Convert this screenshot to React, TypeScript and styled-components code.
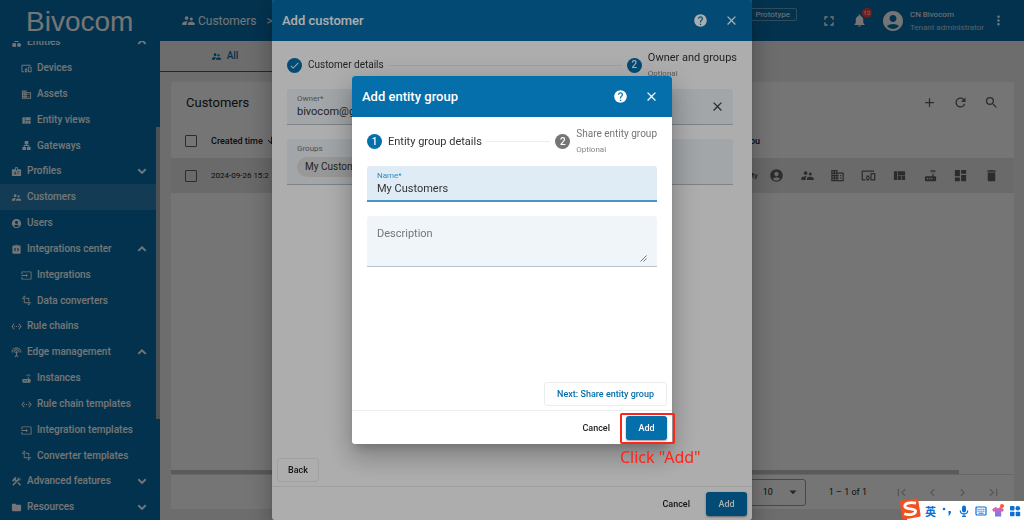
import React from "react";
import styled, { createGlobalStyle, css } from "styled-components";
import type { IconType } from "react-icons";
import {
  MdAccountCircle,
  MdAdd,
  MdArrowDownward,
  MdBadge,
  MdCategory,
  MdCheck,
  MdChevronLeft,
  MdChevronRight,
  MdClose,
  MdConstruction,
  MdDashboard,
  MdDelete,
  MdDevicesOther,
  MdDomain,
  MdFirstPage,
  MdFolder,
  MdFullscreen,
  MdHelp,
  MdInput,
  MdIntegrationInstructions,
  MdLan,
  MdLastPage,
  MdMoreVert,
  MdNotifications,
  MdRefresh,
  MdRouter,
  MdSearch,
  MdSettingsEthernet,
  MdSettingsInputAntenna,
  MdSupervisorAccount,
  MdTransform,
  MdViewQuilt,
} from "react-icons/md";

const PRIMARY = "#056fab";

const GlobalStyle = createGlobalStyle`
  *, *::before, *::after { box-sizing: border-box; }
  body {
    margin: 0;
    overflow: hidden;
    font-family: Roboto, "Liberation Sans", sans-serif;
    font-size: 10px;
    line-height: 14px;
    color: #212121;
  }
  button, input, select, textarea { font: inherit; color: inherit; }
  button { margin: 0; padding: 0; border: 0; background: none; cursor: pointer; }
  svg { display: block; flex: none; }
`;

/* ---------- Shell ---------- */

const Shell = styled.div`
  display: flex;
  height: 100vh;
  background: #eee;
`;

const Sidebar = styled.nav`
  position: relative;
  display: flex;
  flex: none;
  flex-direction: column;
  width: 160px;
  background: ${PRIMARY};
  color: #fff;
`;

const Brand = styled.a`
  flex: none;
  height: 41px;
  padding-left: 26px;
  color: #fff;
  font: 28px/43px "Liberation Sans", Arial, sans-serif;
  text-decoration: none;
`;

const NavViewport = styled.div`
  flex: 1;
  min-height: 0;
  overflow: hidden;
`;

const NavList = styled.div`
  margin-top: -12px;
`;

const navRow = css`
  display: flex;
  align-items: center;
  gap: 5px;
  width: 100%;
  height: 26px;
  padding: 0 13px 0 11px;
  color: #fff;
  font-size: 10px;
  font-weight: 500;
  text-align: left;
  text-decoration: none;
  white-space: nowrap;
`;

const NavLink = styled.a<{ $active?: boolean }>`
  ${navRow}
  background: ${(p) => (p.$active ? "rgba(255, 255, 255, 0.15)" : "none")};
`;

const NavToggle = styled.button`
  ${navRow}
`;

const NavLabel = styled.span`
  flex: 1;
`;

const SubList = styled.div`
  a { padding-left: 21px; }
  a:last-child { height: 25px; }
`;

const ScrollThumb = styled.div`
  position: absolute;
  top: 127px;
  right: 0;
  width: 4px;
  height: 292px;
  background: #a5b2bb;
`;

const Main = styled.div`
  display: flex;
  flex: 1;
  flex-direction: column;
  min-width: 0;
`;

const TopBar = styled.header`
  display: flex;
  flex: none;
  align-items: center;
  height: 41px;
  padding: 0 18px 0 21px;
  background: ${PRIMARY};
  color: #fff;
`;

const Crumb = styled.div`
  display: flex;
  flex: 1;
  align-items: center;
  gap: 2px;
  font-size: 12px;
  span + span { margin-left: 8px; }
`;

const StageChip = styled.span`
  margin: 0 24px 12px 0;
  padding: 0 6px;
  border: 1px solid rgba(255, 255, 255, 0.4);
  border-radius: 2px;
  font-size: 8px;
  line-height: 11px;
`;

const BellButton = styled.button`
  position: relative;
  margin: 0 14px 0 15px;
`;

const BellCount = styled.span`
  position: absolute;
  top: -5px;
  left: 10px;
  width: 10px;
  height: 10px;
  border-radius: 5px;
  background: #f44336;
  font-size: 6px;
  line-height: 10px;
  text-align: center;
`;

const Account = styled.div`
  display: flex;
  align-items: center;
  gap: 5px;
  margin-right: 7px;
  font-size: 8px;
  line-height: 13px;
`;

const AccountRole = styled.div`
  opacity: 0.7;
`;

const TabBar = styled.div`
  display: flex;
  flex: none;
  height: 31px;
`;

const Tab = styled.a`
  display: flex;
  align-items: center;
  justify-content: center;
  gap: 5px;
  width: 129px;
  border-bottom: 1px solid ${PRIMARY};
  color: ${PRIMARY};
  font-weight: 500;
  text-decoration: none;
`;

/* ---------- Customers card ---------- */

const Card = styled.section`
  display: flex;
  flex: 1;
  flex-direction: column;
  min-height: 0;
  margin: 10px 10px 11px 11px;
  border-radius: 2px;
  background: #fff;
`;

const CardHeader = styled.div`
  display: flex;
  flex: none;
  align-items: center;
  justify-content: space-between;
  height: 41px;
  padding: 0 15px;
`;

const CardTitle = styled.h1`
  margin: 0;
  font-size: 13px;
  font-weight: 400;
`;

const IconGroup = styled.div<{ $width: number; $disabled?: boolean }>`
  display: flex;
  justify-content: space-between;
  width: ${(p) => p.$width}px;
  color: ${(p) => (p.$disabled ? "#bdbdbd" : "#616161")};
`;

const TableArea = styled.div`
  flex: 1;
  min-height: 0;
`;

const Table = styled.table`
  width: 100%;
  border-collapse: collapse;
  table-layout: fixed;
  font-size: 9px;
  th, td {
    height: 35px;
    padding: 0;
    overflow: hidden;
    text-align: left;
    white-space: nowrap;
  }
  th { font-weight: 500; }
  td { font-size: 8px; }
  tbody tr { background: #e6e6e6; }
`;

const Checkbox = styled.input`
  display: block;
  width: 12px;
  height: 12px;
  margin: 0 0 0 14px;
  border: 1px solid #616161;
  border-radius: 1px;
  appearance: none;
`;

const SortHeader = styled.span`
  display: flex;
  align-items: center;
  gap: 3px;
`;

const RowActions = styled.div`
  padding-left: 7px;
`;

const GroupName = styled.div`
  padding-left: 3px;
`;

const HScroll = styled.div`
  flex: none;
  height: 4px;
  margin-right: 55px;
  background: #c4c4c4;
`;

const Paginator = styled.div`
  display: flex;
  flex: none;
  align-items: center;
  justify-content: flex-end;
  height: 35px;
  padding-right: 13px;
  border-top: 1px solid #e0e0e0;
  font-size: 9px;
`;

const PageSize = styled.label`
  position: relative;
  margin-right: 23px;
  svg { position: absolute; top: 11px; right: 9px; }
`;

const PageSelect = styled.select`
  width: 60px;
  height: 27px;
  padding: 0 16px;
  border: 1px solid #9e9e9e;
  border-radius: 3px;
  background: none;
  appearance: none;
`;

const PageRange = styled.span`
  margin-right: 27px;
`;

/* ---------- Dialogs ---------- */

const Backdrop = styled.div<{ $level: number }>`
  position: fixed;
  inset: 0;
  z-index: ${(p) => p.$level};
  display: flex;
  align-items: center;
  justify-content: center;
  background: rgba(0, 0, 0, 0.32);
`;

const Dialog = styled.form<{ $wide?: boolean }>`
  display: flex;
  flex-direction: column;
  width: ${(p) => (p.$wide ? 480 : 320)}px;
  max-width: 100%;
  min-height: ${(p) => (p.$wide ? "100vh" : "368px")};
  border-radius: 3px;
  background: #fff;
  box-shadow: 0 7px 10px -4px rgba(0, 0, 0, 0.2), 0 15px 24px 2px rgba(0, 0, 0, 0.14),
    0 6px 29px 5px rgba(0, 0, 0, 0.12);
`;

const DialogHeader = styled.div`
  display: flex;
  align-items: center;
  height: 41px;
  padding: 0 13px 0 10px;
  border-radius: 3px 3px 0 0;
  background: ${PRIMARY};
  color: #fff;
  button { margin-left: 16px; }
`;

const DialogTitle = styled.h2`
  flex: 1;
  margin: 0;
  font-size: 13px;
  font-weight: 500;
`;

const DialogBody = styled.div<{ $wide?: boolean }>`
  display: flex;
  flex: 1;
  flex-direction: column;
  padding: 0 ${(p) => (p.$wide ? 19 : 15)}px 0 15px;
`;

const Stepper = styled.div<{ $wide?: boolean }>`
  display: flex;
  align-items: center;
  height: ${(p) => (p.$wide ? 48 : 49)}px;
  margin-right: ${(p) => (p.$wide ? -4 : 0)}px;
`;

const StepHead = styled.div`
  display: flex;
  align-items: center;
  gap: 6px;
  white-space: nowrap;
`;

const StepBadge = styled.span<{ $idle?: boolean }>`
  display: flex;
  align-items: center;
  justify-content: center;
  width: 15px;
  height: 15px;
  border-radius: 50%;
  background: ${(p) => (p.$idle ? "#757575" : PRIMARY)};
  color: #fff;
  font-size: 10px;
  font-weight: 500;
`;

const StepText = styled.div<{ $muted?: boolean; $size: number }>`
  color: ${(p) => (p.$muted ? "#757575" : "#333")};
  font-size: ${(p) => p.$size}px;
  line-height: 16px;
`;

const StepHint = styled.div`
  color: #858585;
  font-size: 8px;
  line-height: 15px;
`;

const StepLine = styled.div`
  flex: 1;
  height: 1px;
  margin: 0 5px;
  background: #ededed;
`;

const Field = styled.div<{ $focused?: boolean; $tall?: number }>`
  position: relative;
  display: flex;
  flex-direction: column;
  justify-content: flex-start;
  height: ${(p) => p.$tall ?? 36}px;
  margin-bottom: 14px;
  padding: 4px 10px 0;
  border-bottom: ${(p) => (p.$focused ? "2px solid #4497c9" : "1px solid #b9c2c8")};
  border-radius: 3px 3px 0 0;
  background: ${(p) => (p.$focused ? "#e0ecf5" : "#f0f5fa")};
  label { color: ${(p) => (p.$focused ? "#2f8bc2" : "#757575")}; font-size: 8px; line-height: 12px; }
  input { width: 100%; padding: 0; border: 0; outline: 0; background: none; color: #333; font-size: 11px; line-height: 14px; }
  textarea {
    flex: 1; width: 100%; padding: 7px 0 0; border: 0; outline: 0; background: none; resize: none;
    font-size: 11px; line-height: 14px;
  }
  textarea::placeholder { color: #757575; opacity: 1; }
`;

const ClearButton = styled.button`
  position: absolute;
  top: 10px;
  right: 8px;
  color: #424242;
`;

const ResizeGrip = styled.svg`
  position: absolute;
  right: 10px;
  bottom: 4px;
`;

const GroupChip = styled.span`
  align-self: flex-start;
  height: 20px;
  margin-top: 2px;
  padding: 0 8px;
  border-radius: 10px;
  background: #e0e0e0;
  color: #333;
  line-height: 20px;
`;

const StepActions = styled.div<{ $end?: boolean }>`
  display: flex;
  justify-content: ${(p) => (p.$end ? "flex-end" : "flex-start")};
  padding: 0 5px 4px;
`;

const OutlineButton = styled.button<{ $primary?: boolean }>`
  height: 24px;
  padding: 0 ${(p) => (p.$primary ? 12 : 10)}px;
  border: 1px solid #ececec;
  border-radius: 3px;
  color: ${(p) => (p.$primary ? PRIMARY : "#212121")};
  font-size: 9px;
  font-weight: 500;
`;

const DialogFooter = styled.div`
  display: flex;
  align-items: center;
  justify-content: flex-end;
  height: 34px;
  padding: 0 5px;
  border-top: 1px solid #ececec;
`;

const TextButton = styled.button`
  height: 24px;
  margin-right: 16px;
  font-size: 9px;
  font-weight: 500;
`;

const FilledButton = styled.button`
  width: 41px;
  height: 24px;
  border-radius: 3px;
  background: ${PRIMARY};
  box-shadow: 0 1px 2px rgba(0, 0, 0, 0.4);
  color: #fff;
  font-size: 9px;
  font-weight: 500;
`;

const Callout = styled.div`
  position: relative;
  display: flex;
`;

const CalloutFrame = styled.div`
  position: absolute;
  inset: -3px -8px -4px -6px;
  border: 2px solid #ff2318;
  border-radius: 2px;
  pointer-events: none;
`;

const CalloutText = styled.div`
  position: absolute;
  top: 30px;
  left: -6px;
  color: #ff2318;
  font: 16px/22px "Noto Sans", sans-serif;
  white-space: nowrap;
`;

/* ---------- Input method bar ---------- */

const ImeBar = styled.div`
  position: fixed;
  right: 0;
  bottom: 0;
  z-index: 5;
  display: flex;
  align-items: center;
  gap: 5px;
  height: 19px;
  padding: 0 3px 0 18px;
  background: #fff;
  color: #0b6fd3;
  font: 700 11px/18px "Noto Sans CJK SC", sans-serif;
`;

const ImeLogo = styled.svg`
  position: absolute;
  bottom: 0;
  left: -8px;
`;

const Chevron = ({ up }: { up?: boolean }) => (
  <svg width="10" height="8" viewBox="0 0 10 8" fill="none" stroke="currentColor" strokeWidth="2">
    <path d={up ? "M1.3 5.9 5 2.3l3.7 3.6" : "M1.3 2.3 5 5.9l3.7-3.6"} />
  </svg>
);

type NavItem = { icon: IconType; label: string; open?: boolean; group?: boolean; active?: boolean; items?: [IconType, string][] };

const NAV: NavItem[] = [
  {
    icon: MdCategory, label: "Entities", group: true, open: true,
    items: [[MdDevicesOther, "Devices"], [MdDomain, "Assets"], [MdViewQuilt, "Entity views"], [MdLan, "Gateways"]],
  },
  { icon: MdBadge, label: "Profiles", group: true },
  { icon: MdSupervisorAccount, label: "Customers", active: true },
  { icon: MdAccountCircle, label: "Users" },
  {
    icon: MdIntegrationInstructions, label: "Integrations center", group: true, open: true,
    items: [[MdInput, "Integrations"], [MdTransform, "Data converters"]],
  },
  { icon: MdSettingsEthernet, label: "Rule chains" },
  {
    icon: MdSettingsInputAntenna, label: "Edge management", group: true, open: true,
    items: [
      [MdRouter, "Instances"], [MdSettingsEthernet, "Rule chain templates"],
      [MdInput, "Integration templates"], [MdTransform, "Converter templates"],
    ],
  },
  { icon: MdConstruction, label: "Advanced features", group: true },
  { icon: MdFolder, label: "Resources", group: true },
];

const ROW_ACTIONS: [IconType, string][] = [
  [MdAccountCircle, "Users"], [MdSupervisorAccount, "Customers"], [MdDomain, "Assets"], [MdDevicesOther, "Devices"],
  [MdViewQuilt, "Entity views"], [MdRouter, "Edges"], [MdDashboard, "Dashboards"], [MdDelete, "Delete"],
];

const PAGE_ACTIONS: [IconType, string][] = [
  [MdFirstPage, "First page"], [MdChevronLeft, "Previous page"], [MdChevronRight, "Next page"], [MdLastPage, "Last page"],
];

const CARD_ACTIONS: [IconType, string][] = [[MdAdd, "Add"], [MdRefresh, "Refresh"], [MdSearch, "Search"]];

const IconButtons = ({ items, width, disabled }: { items: [IconType, string][]; width: number; disabled?: boolean }) => (
  <IconGroup $width={width} $disabled={disabled}>
    {items.map(([Icon, name]) => (
      <button key={name} type="button" aria-label={name} disabled={disabled}><Icon size={15} /></button>
    ))}
  </IconGroup>
);

const Navigation = () => (
  <Sidebar>
    <Brand href="#">Bivocom</Brand>
    <NavViewport>
      <NavList>
        {NAV.map(({ icon: Icon, label, group, open, active, items }) => (
          <React.Fragment key={label}>
            {group ? (
              <NavToggle type="button"><Icon size={11} /><NavLabel>{label}</NavLabel><Chevron up={open} /></NavToggle>
            ) : (
              <NavLink href="#" $active={active}><Icon size={11} /><NavLabel>{label}</NavLabel></NavLink>
            )}
            {items && (
              <SubList>
                {items.map(([SubIcon, name]) => (
                  <NavLink href="#" key={name}><SubIcon size={11} /><NavLabel>{name}</NavLabel></NavLink>
                ))}
              </SubList>
            )}
          </React.Fragment>
        ))}
      </NavList>
    </NavViewport>
    <ScrollThumb />
  </Sidebar>
);

const DialogHead = ({ title }: { title: string }) => (
  <DialogHeader>
    <DialogTitle>{title}</DialogTitle>
    <button type="button" aria-label="Help"><MdHelp size={15} /></button>
    <button type="button" aria-label="Close"><MdClose size={15} /></button>
  </DialogHeader>
);

export default function App() {
  return (
    <>
      <GlobalStyle />
      <Shell>
        <Navigation />
        <Main>
          <TopBar>
            <Crumb><MdSupervisorAccount size={15} /><span>Customers</span><span>&gt;</span></Crumb>
            <StageChip>Prototype</StageChip>
            <button type="button" aria-label="Fullscreen"><MdFullscreen size={16} /></button>
            <BellButton type="button" aria-label="Notifications">
              <MdNotifications size={15} /><BellCount>12</BellCount>
            </BellButton>
            <Account>
              <MdAccountCircle size={24} />
              <div>CN Bivocom<AccountRole>Tenant administrator</AccountRole></div>
            </Account>
            <button type="button" aria-label="More"><MdMoreVert size={15} /></button>
          </TopBar>
          <TabBar><Tab href="#"><MdSupervisorAccount size={11} />All</Tab></TabBar>
          <Card>
            <CardHeader>
              <CardTitle>Customers</CardTitle>
              <IconButtons items={CARD_ACTIONS} width={77} />
            </CardHeader>
            <TableArea>
              <Table>
                <colgroup>
                  <col style={{ width: 40 }} /><col /><col style={{ width: 18 }} /><col style={{ width: 252 }} />
                </colgroup>
                <thead>
                  <tr>
                    <th><Checkbox type="checkbox" aria-label="Select all" /></th>
                    <th><SortHeader>Created time <MdArrowDownward size={11} /></SortHeader></th>
                    <th>Cou</th>
                    <th />
                  </tr>
                </thead>
                <tbody>
                  <tr>
                    <td><Checkbox type="checkbox" aria-label="Select row" /></td>
                    <td>2024-09-26 15:2</td>
                    <td><GroupName>My</GroupName></td>
                    <td><RowActions><IconButtons items={ROW_ACTIONS} width={230} /></RowActions></td>
                  </tr>
                </tbody>
              </Table>
            </TableArea>
            <HScroll />
            <Paginator>
              <PageSize>
                <PageSelect aria-label="Items per page" defaultValue="10"><option>10</option></PageSelect>
                <svg width="8" height="5" viewBox="0 0 8 5"><path d="M0.5 0.5h7L4 4.3z" fill="#555" /></svg>
              </PageSize>
              <PageRange>1 – 1 of 1</PageRange>
              <IconButtons items={PAGE_ACTIONS} width={107} disabled />
            </Paginator>
          </Card>
        </Main>
      </Shell>

      <Backdrop $level={1}>
        <Dialog $wide>
          <DialogHead title="Add customer" />
          <DialogBody $wide>
            <Stepper $wide>
              <StepHead><StepBadge><MdCheck size={11} /></StepBadge><StepText $size={10}>Customer details</StepText></StepHead>
              <StepLine />
              <StepHead>
                <StepBadge>2</StepBadge>
                <div><StepText $size={11}>Owner and groups</StepText><StepHint>Optional</StepHint></div>
              </StepHead>
            </Stepper>
            <Field>
              <label htmlFor="owner">Owner*</label>
              <input id="owner" defaultValue="bivocom@g" />
              <ClearButton type="button" aria-label="Clear"><MdClose size={15} /></ClearButton>
            </Field>
            <Field $tall={46}>
              <label>Groups</label>
              <GroupChip>My Customers</GroupChip>
            </Field>
          </DialogBody>
          <StepActions><OutlineButton type="button">Back</OutlineButton></StepActions>
          <DialogFooter>
            <TextButton type="button">Cancel</TextButton>
            <FilledButton type="button">Add</FilledButton>
          </DialogFooter>
        </Dialog>
      </Backdrop>

      <Backdrop $level={2}>
        <Dialog>
          <DialogHead title="Add entity group" />
          <DialogBody>
            <Stepper>
              <StepHead><StepBadge>1</StepBadge><StepText $size={11}>Entity group details</StepText></StepHead>
              <StepLine />
              <StepHead>
                <StepBadge $idle>2</StepBadge>
                <div><StepText $muted $size={10}>Share entity group</StepText><StepHint>Optional</StepHint></div>
              </StepHead>
            </Stepper>
            <Field $focused>
              <label htmlFor="name">Name*</label>
              <input id="name" defaultValue="My Customers" />
            </Field>
            <Field $tall={51}>
              <textarea aria-label="Description" placeholder="Description" />
              <ResizeGrip width="7" height="7" viewBox="0 0 7 7" stroke="#555" strokeWidth="0.8">
                <path d="M0.5 6.5l6-6M3.5 6.5l3-3" />
              </ResizeGrip>
            </Field>
          </DialogBody>
          <StepActions $end><OutlineButton type="button" $primary>Next: Share entity group</OutlineButton></StepActions>
          <DialogFooter>
            <TextButton type="button">Cancel</TextButton>
            <Callout>
              <FilledButton type="button">Add</FilledButton>
              <CalloutFrame />
              <CalloutText>Click "Add"</CalloutText>
            </Callout>
          </DialogFooter>
        </Dialog>
      </Backdrop>

      <ImeBar>
        <ImeLogo width="22" height="22" viewBox="0 0 22 22">
          <path d="M2.5 2.8 17.5.5q1.4-.1 1.7 1.2L21.6 17q.2 1.5-1.2 1.8L5 21.4q-1.4.1-1.7-1.2L.9 4.7Q.8 3.1 2.5 2.8z" fill="#f4511e" />
          <path d="M17 5.2C11 3.600 5.300 5.600 5.800 8.500c.6 3.200 10.500 1.500 10.800 4.700.2 3.200-6.500 4.400-11.300 2.600" fill="none" stroke="#fff" strokeWidth="2.8" />
        </ImeLogo>
        <span>英</span>
        <svg width="12" height="12" viewBox="0 0 12 12" fill="currentColor">
          <circle cx="3" cy="4" r="1.3" /><path d="M7.5 6h2.3v2.200L8.300 10.500H7.300L8 8.300h-.5z" />
        </svg>
        <svg width="12" height="12" viewBox="0 0 12 12" fill="none" stroke="currentColor">
          <rect x="4" y="0.5" width="4" height="7" rx="2" fill="currentColor" stroke="none" />
          <path d="M2.3 5.5c0 4.600 7.400 4.600 7.400 0M6 9v2.500M4 11.400h4" strokeWidth="1.2" />
        </svg>
        <svg width="12" height="12" viewBox="0 0 12 12" fill="none" stroke="currentColor">
          <rect x="1" y="2" width="10" height="8" rx="1" strokeWidth="1.2" />
          <path d="M2.5 4.3h7M2.500 6.200h7" strokeDasharray="1.2 0.7" /><path d="M3.5 8.200h5" />
        </svg>
        <svg width="12" height="13" viewBox="0 0 12 13">
          <defs>
            <linearGradient id="shirt" x1="0" y1="0" x2="0" y2="1">
              <stop offset="0" stopColor="#f0609a" /><stop offset="1" stopColor="#6a7cf5" />
            </linearGradient>
          </defs>
          <path d="M3.5 3 6 4.200 8.500 3 12 5.500 10.300 8 9.200 7.300V12.500H3V7.300L1.700 8 0 5.500z" fill="url(#shirt)" />
          <circle cx="10" cy="2" r="2" fill="#ff5722" />
        </svg>
        <svg width="12" height="12" viewBox="0 0 12 12" fill="currentColor">
          <rect x="1" y="1" width="4.500" height="4.500" rx="0.8" /><circle cx="8.800" cy="3.200" r="2.300" />
          <rect x="1" y="6.700" width="4.500" height="4.500" rx="0.8" /><rect x="6.700" y="6.700" width="4.500" height="4.500" rx="0.8" />
        </svg>
      </ImeBar>
    </>
  );
}
